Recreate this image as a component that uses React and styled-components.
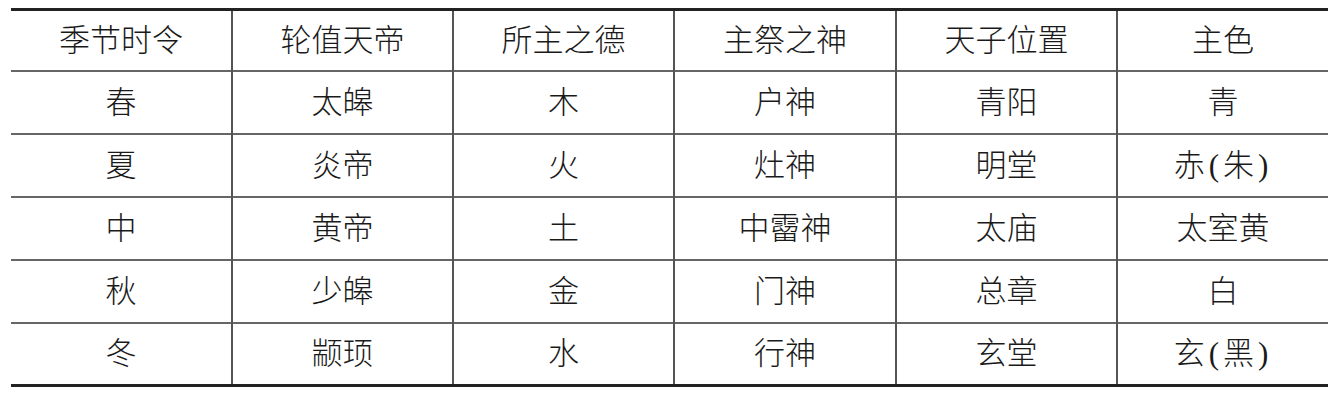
import React from "react"
import styled, { createGlobalStyle } from "styled-components"

const GlobalStyle = createGlobalStyle`
  html, body {
    margin: 0;
    padding: 0;
    background: #fff;
  }
`

const Page = styled.div`
  padding: 8px 0 0 11px;
`

const Table = styled.table`
  width: 1317px;
  border-collapse: collapse;
  table-layout: fixed;
  border-top: 3px solid #222;
  border-bottom: 3px solid #222;
  font-family: "Liberation Serif", "Noto Sans CJK SC", serif;
  font-weight: 300;
  color: #1a1a1a;
`

const Row = styled.tr`
  height: ${p => (p.head ? 61 : 63)}px;
`

const Cell = styled.td`
  padding: 0;
  text-align: center;
  vertical-align: middle;
  font-size: 31px;
  line-height: 1;
  border-top: 2px solid #666;
  border-left: 2px solid #555;
  &:first-child {
    border-left: none;
  }
`

const Paren = styled.span`
  margin: 0 4px;
`

const widths = [221, 221, 221, 222, 221, 211]

const header = ["季节时令", "轮值天帝", "所主之德", "主祭之神", "天子位置", "主色"]

const rows = [
  ["春", "太皞", "木", "户神", "青阳", "青"],
  ["夏", "炎帝", "火", "灶神", "明堂", "赤(朱)"],
  ["中", "黄帝", "土", "中霤神", "太庙", "太室黄"],
  ["秋", "少皞", "金", "门神", "总章", "白"],
  ["冬", "颛顼", "水", "行神", "玄堂", "玄(黑)"],
]

// split "赤(朱)" so the brackets get a bit of air, as in the print
const renderText = text =>
  text.split(/([()])/).map((part, i) =>
    part === "(" || part === ")" ? <Paren key={i}>{part}</Paren> : part
  )

const App = () => {
  return (
    <>
      <GlobalStyle />
      <Page>
        <Table>
          <colgroup>
            {widths.map((w, i) => (
              <col key={i} style={{ width: w }} />
            ))}
          </colgroup>
          <tbody>
            <Row head>
              {header.map(h => (
                <Cell key={h}>{h}</Cell>
              ))}
            </Row>
            {rows.map((r, i) => (
              <Row key={i}>
                {r.map((c, j) => (
                  <Cell key={j}>{renderText(c)}</Cell>
                ))}
              </Row>
            ))}
          </tbody>
        </Table>
      </Page>
    </>
  )
}

export default App
